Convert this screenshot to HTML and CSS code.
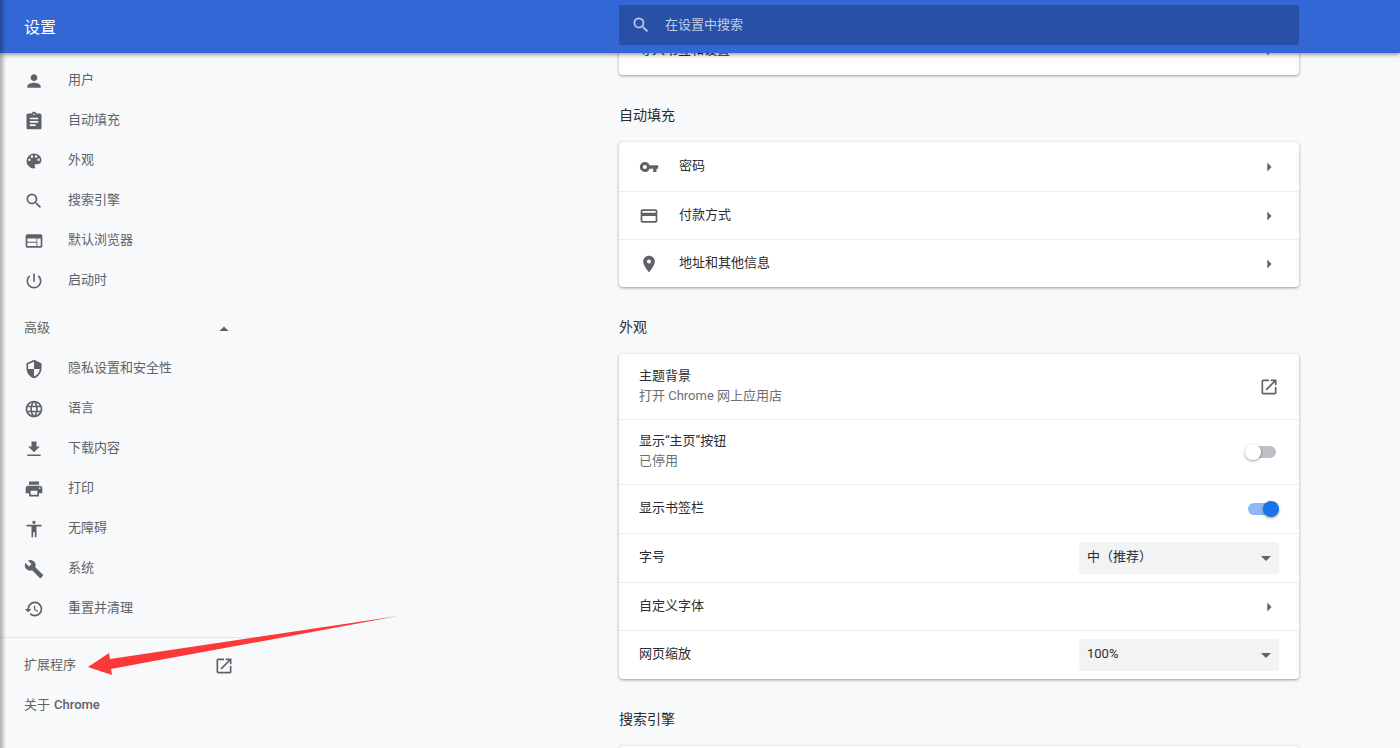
FILE: index.html
```
<!DOCTYPE html>
<html lang="zh-CN">
<head>
<meta charset="utf-8">
<title>设置</title>
<link rel="stylesheet" href="styles.css">
</head>
<body>
<svg class="defs" aria-hidden="true">
  <symbol id="search" viewBox="0 0 24 24"><path d="M15.5 14h-.79l-.28-.27A6.471 6.471 0 0 0 16 9.500 6.500 6.500 0 1 0 9.500 16c1.610 0 3.090-.59 4.230-1.570l.27.28v.79l5 4.990L20.490 19l-4.990-5zm-6 0C7.010 14 5 11.990 5 9.500S7.010 5 9.500 5 14 7.010 14 9.500 11.990 14 9.500 14z"/></symbol>
  <symbol id="right" viewBox="0 0 24 24"><path d="M10 17.500l5-5.500-5-5.500z"/></symbol>
  <symbol id="down" viewBox="0 0 24 24"><path d="M6 9.500l6 6 6-6z"/></symbol>
  <symbol id="open" viewBox="0 0 24 24"><path d="M19 19H5V5h7V3H5a2 2 0 0 0-2 2v14a2 2 0 0 0 2 2h14c1.100 0 2-.9 2-2v-7h-2v7zM14 3v2h3.590l-9.830 9.830 1.410 1.410L19 6.410V10h2V3h-7z"/></symbol>
</svg>

<header class="toolbar">
  <h1 class="toolbar-title">设置</h1>
  <label class="search">
    <svg class="icon"><use href="#search"/></svg>
    <input class="search-input" type="search" placeholder="在设置中搜索" aria-label="在设置中搜索">
  </label>
</header>

<div class="content">
  <nav class="sidebar">
    <a class="nav-item" href="#people"><svg class="icon" viewBox="0 0 24 24"><path d="M12 12c2.210 0 4-1.790 4-4s-1.790-4-4-4-4 1.790-4 4 1.790 4 4 4zm0 2c-2.670 0-8 1.340-8 4v2h16v-2c0-2.660-5.330-4-8-4z"/></svg>用户</a>
    <a class="nav-item" href="#autofill"><svg class="icon" viewBox="0 0 24 24"><path d="M19 3h-4.180C14.400 1.840 13.300 1 12 1s-2.400.84-2.820 2H5c-1.100 0-2 .9-2 2v15c0 1.100.9 2 2 2h14c1.100 0 2-.9 2-2V5c0-1.100-.9-2-2-2zm-7 0c.55 0 1 .45 1 1s-.45 1-1 1-1-.45-1-1 .45-1 1-1zm2 15H7v-2h7v2zm3-4H7v-2h10v2zm0-4H7V8h10v2z"/></svg>自动填充</a>
    <a class="nav-item" href="#appearance"><svg class="icon" viewBox="0 0 24 24"><path d="M12 3a9 9 0 0 0 0 18c.83 0 1.500-.67 1.500-1.500 0-.39-.15-.74-.39-1.010-.23-.26-.38-.61-.38-.99 0-.83.67-1.500 1.500-1.500H16c2.760 0 5-2.240 5-5 0-4.420-4.030-8-9-8zm-5.500 9a1.500 1.500 0 1 1 0-3 1.500 1.500 0 0 1 0 3zm3-4a1.500 1.500 0 1 1 0-3 1.500 1.500 0 0 1 0 3zm5 0a1.500 1.500 0 1 1 0-3 1.500 1.500 0 0 1 0 3zm3 4a1.500 1.500 0 1 1 0-3 1.500 1.500 0 0 1 0 3z"/></svg>外观</a>
    <a class="nav-item" href="#search-engine"><svg class="icon"><use href="#search"/></svg>搜索引擎</a>
    <a class="nav-item" href="#default-browser"><svg class="icon" viewBox="0 0 24 24"><path d="M20 4H4c-1.100 0-1.990.9-1.990 2L2 18c0 1.100.9 2 2 2h16c1.100 0 2-.9 2-2V6c0-1.100-.9-2-2-2zm-5 14H4v-4h11v4zm0-5H4V9h11v4zm5 5h-4V9h4v9z"/></svg>默认浏览器</a>
    <a class="nav-item" href="#startup"><svg class="icon" viewBox="0 0 24 24"><path d="M13 3h-2v10h2V3zm4.830 2.170l-1.420 1.420A6.920 6.920 0 0 1 19 12a7 7 0 1 1-11.420-5.420L6.170 5.170A8.932 8.932 0 0 0 3 12a9 9 0 0 0 18 0c0-2.740-1.230-5.180-3.170-6.830z"/></svg>启动时</a>
    <button class="nav-item nav-toggle" type="button" aria-expanded="true">高级<svg class="icon" viewBox="0 0 24 24"><path d="M6.500 14.500l5.500-5.500 5.500 5.500z"/></svg></button>
    <a class="nav-item" href="#privacy"><svg class="icon" viewBox="0 0 24 24"><path d="M12 1L3 5v6c0 5.550 3.840 10.740 9 12 5.160-1.260 9-6.450 9-12V5l-9-4zm0 10.990h7c-.53 4.120-3.280 7.790-7 8.940V12H5V6.300l7-3.110v8.800z"/></svg>隐私设置和安全性</a>
    <a class="nav-item" href="#languages"><svg class="icon" viewBox="0 0 24 24"><path d="M11.990 2C6.470 2 2 6.480 2 12s4.470 10 9.990 10C17.520 22 22 17.520 22 12S17.520 2 11.990 2zm6.930 6h-2.950a15.650 15.650 0 0 0-1.380-3.560A8.030 8.030 0 0 1 18.920 8zM12 4.040c.83 1.200 1.480 2.530 1.910 3.960h-3.820c.43-1.430 1.080-2.760 1.910-3.960zM4.260 14C4.100 13.360 4 12.690 4 12s.1-1.360.26-2h3.380c-.08.66-.14 1.320-.14 2s.06 1.340.14 2H4.260zm.82 2h2.950c.32 1.250.78 2.450 1.380 3.560A7.987 7.987 0 0 1 5.080 16zm2.950-8H5.080a7.987 7.987 0 0 1 4.330-3.560A15.650 15.650 0 0 0 8.030 8zM12 19.960c-.83-1.200-1.480-2.530-1.910-3.960h3.820c-.43 1.430-1.080 2.760-1.910 3.960zM14.340 14H9.660c-.09-.66-.16-1.320-.16-2s.07-1.350.16-2h4.680c.09.65.16 1.320.16 2s-.07 1.340-.16 2zm.25 5.560c.6-1.110 1.060-2.310 1.380-3.560h2.950a8.030 8.030 0 0 1-4.330 3.560zM16.360 14c.08-.66.14-1.320.14-2s-.06-1.340-.14-2h3.380c.16.64.26 1.310.26 2s-.1 1.360-.26 2h-3.380z"/></svg>语言</a>
    <a class="nav-item" href="#downloads"><svg class="icon" viewBox="0 0 24 24"><path d="M19 9h-4V3H9v6H5l7 7 7-7zM4 18.500v2h16v-2z"/></svg>下载内容</a>
    <a class="nav-item" href="#printing"><svg class="icon" viewBox="0 0 24 24"><path d="M19 8H5c-1.660 0-3 1.340-3 3v6h4v4h12v-4h4v-6c0-1.660-1.340-3-3-3zm-3 11H8v-5h8v5zm3-7c-.55 0-1-.45-1-1s.45-1 1-1 1 .45 1 1-.45 1-1 1zm-1-9H6v4h12V3z"/></svg>打印</a>
    <a class="nav-item" href="#accessibility"><svg class="icon" viewBox="0 0 24 24"><path d="M12 2c1.100 0 2 .9 2 2s-.9 2-2 2-2-.9-2-2 .9-2 2-2zm9 7h-6v13h-2v-6h-2v6H9V9H3V7h18v2z"/></svg>无障碍</a>
    <a class="nav-item" href="#system"><svg class="icon" viewBox="0 0 24 24"><path d="M22.700 19l-9.100-9.100c.9-2.300.4-5-1.500-6.900-2-2-5-2.400-7.400-1.300L9 6 6 9 1.600 4.700C.4 7.100.9 10.100 2.900 12.100c1.900 1.900 4.600 2.400 6.900 1.500l9.100 9.100c.4.4 1 .4 1.400 0l2.300-2.300c.5-.4.5-1.100.1-1.400z"/></svg>系统</a>
    <a class="nav-item" href="#reset"><svg class="icon" viewBox="0 0 24 24"><path d="M13 3a9 9 0 0 0-9 9H1l3.890 3.890.07.14L9 12H6a7 7 0 1 1 7 7c-1.930 0-3.680-.79-4.940-2.060l-1.420 1.420A8.954 8.954 0 0 0 13 21a9 9 0 0 0 0-18zm-1 5v5l4.280 2.540.72-1.210-3.500-2.080V8H12z"/></svg>重置并清理</a>
    <div class="nav-footer">
      <a class="nav-item nav-split" href="#extensions">扩展程序<svg class="icon"><use href="#open"/></svg></a>
      <a class="nav-item nav-about" href="#about">关于 <span class="medium">Chrome</span></a>
    </div>
  </nav>

  <main class="sections">
    <section class="card">
      <a class="row" href="#import"><span class="row-label">导入书签和设置</span><svg class="icon"><use href="#right"/></svg></a>
    </section>

    <h2 class="section-title">自动填充</h2>
    <section class="card" id="autofill">
      <a class="row row-tall" href="#passwords"><svg class="icon" viewBox="0 0 24 24"><path d="M12.650 10A5.990 5.990 0 0 0 7 6a6 6 0 0 0 0 12 5.990 5.990 0 0 0 5.650-4H17v4h4v-4h2v-4H12.650zM7 14.500a2.500 2.500 0 1 1 0-5 2.500 2.500 0 0 1 0 5z"/></svg><span class="row-label">密码</span><svg class="icon"><use href="#right"/></svg></a>
      <a class="row" href="#payments"><svg class="icon" viewBox="0 0 24 24"><path d="M20 4H4c-1.110 0-1.990.89-1.990 2L2 18c0 1.110.89 2 2 2h16c1.110 0 2-.89 2-2V6c0-1.110-.89-2-2-2zm0 14H4v-6h16v6zm0-10H4V6h16v2z"/></svg><span class="row-label">付款方式</span><svg class="icon"><use href="#right"/></svg></a>
      <a class="row" href="#addresses"><svg class="icon" viewBox="0 0 24 24"><path d="M12 2C8.130 2 5 5.130 5 9c0 5.250 7 13 7 13s7-7.750 7-13c0-3.870-3.130-7-7-7zm0 9.500a2.500 2.500 0 1 1 0-5 2.500 2.500 0 0 1 0 5z"/></svg><span class="row-label">地址和其他信息</span><svg class="icon"><use href="#right"/></svg></a>
    </section>

    <h2 class="section-title">外观</h2>
    <section class="card" id="appearance">
      <a class="row row-double" href="#themes"><span class="row-label">主题背景<span class="row-sub">打开 Chrome 网上应用店</span></span><svg class="icon"><use href="#open"/></svg></a>
      <label class="row row-double"><span class="row-label">显示“主页”按钮<span class="row-sub">已停用</span></span><input class="switch" type="checkbox" role="switch"></label>
      <label class="row row-tall"><span class="row-label">显示书签栏</span><input class="switch" type="checkbox" role="switch" checked></label>
      <div class="row row-tall">
        <label class="row-label" for="font-size">字号</label>
        <span class="select-box"><select class="select" id="font-size"><option>中（推荐）</option></select><svg class="icon select-arrow"><use href="#down"/></svg></span>
      </div>
      <a class="row" href="#fonts"><span class="row-label">自定义字体</span><svg class="icon"><use href="#right"/></svg></a>
      <div class="row row-tall">
        <label class="row-label" for="page-zoom">网页缩放</label>
        <span class="select-box"><select class="select" id="page-zoom"><option>100%</option></select><svg class="icon select-arrow"><use href="#down"/></svg></span>
      </div>
    </section>

    <h2 class="section-title">搜索引擎</h2>
    <section class="card" id="search-engine"><div class="row"></div></section>
  </main>
</div>

<svg class="pointer" viewBox="0 0 310 60" aria-hidden="true"><path d="M0 51L21 37l1 6L310 0Q160 28 23 53l1 6z"/></svg>
</body>
</html>
```
FILE: styles.css
```
* {
  box-sizing: border-box;
}

body {
  margin: 0;
  height: 100vh;
  display: flex;
  flex-direction: column;
  overflow: hidden;
  position: relative;
  background: #f8f9fa;
  color: #2b2c2f;
  font: 13px/20px Roboto, "Noto Sans CJK SC", sans-serif;
}

/* Soft shade along the window's left edge */
body::after {
  content: "";
  position: absolute;
  inset: 0 auto 0 0;
  width: 6px;
  z-index: 3;
  background: linear-gradient(to right, rgba(0, 0, 0, 0.3), rgba(0, 0, 0, 0));
  pointer-events: none;
}

a {
  color: inherit;
  text-decoration: none;
}

.defs {
  display: none;
}

.icon {
  width: 20px;
  height: 20px;
  flex: none;
  fill: #5f6368;
}

.toolbar,
.content {
  display: grid;
  grid-template-columns: 256px 1fr minmax(0, 680px) 101px;
}

.toolbar {
  position: relative;
  z-index: 2;
  flex: none;
  height: 53px;
  background: #3367d6;
  color: #fff;
  box-shadow: 0 1px 5px rgba(0, 0, 0, 0.5);
}

.toolbar-title {
  margin: 0;
  padding: 2px 0 0 24px;
  font-size: 16px;
  font-weight: 400;
  line-height: 51px;
}

.search {
  grid-column: 3;
  height: 40px;
  margin-top: 5px;
  padding: 0 12px;
  display: flex;
  align-items: center;
  gap: 14px;
  border-radius: 2px;
  background: #2850a7;
}

.search .icon {
  fill: #bfcbe5;
}

.search-input {
  flex: 1;
  min-width: 0;
  padding: 0;
  border: 0;
  outline: 0;
  background: none;
  color: #fff;
  font: inherit;
}

.search-input::placeholder {
  color: #bfcbe5;
}

.content {
  flex: 1;
  min-height: 0;
}

.sidebar {
  padding-top: 8px;
  color: #5f6368;
}

.nav-item {
  height: 40px;
  padding: 0 24px 2px;
  display: flex;
  align-items: center;
  gap: 24px;
}

.nav-item .icon {
  margin-top: 2px;
}

.nav-toggle {
  width: 100%;
  margin-top: 8px;
  border: 0;
  background: none;
  color: inherit;
  font: inherit;
}

.nav-toggle,
.nav-split {
  padding-right: 22px;
  justify-content: space-between;
}

.nav-about {
  gap: 4px;
}

.nav-footer {
  margin-top: 8px;
  padding-top: 8px;
  border-top: 1px solid #e3e5e7;
}

.medium {
  font-weight: 500;
}

/* The list is shown scrolled, its first row partly under the toolbar */
.sections {
  grid-column: 3;
  margin-top: -26px;
}

.card {
  border-radius: 4px;
  background: #fff;
  box-shadow: 0 1px 2px rgba(60, 64, 67, 0.3), 0 1px 3px 1px rgba(60, 64, 67, 0.15);
}

.section-title {
  margin: 0;
  padding: 30px 0 17px;
  font-size: 14px;
  font-weight: 400;
  line-height: 20px;
}

.row {
  min-height: 48px;
  padding: 0 20px;
  display: flex;
  align-items: center;
  gap: 20px;
}

.row + .row {
  border-top: 1px solid #ebedef;
}

.row-tall {
  min-height: 49px;
}

.row-double {
  min-height: 65px;
}

.row-label {
  flex: 1;
  padding-bottom: 2px;
}

.row-sub {
  display: block;
  color: #6b6f74;
}

.switch {
  appearance: none;
  position: relative;
  width: 34px;
  height: 16px;
  margin: 0;
}

.switch::before {
  content: "";
  position: absolute;
  inset: 2px 3px;
  border-radius: 6px;
  background: #bdc1c6;
}

.switch::after {
  content: "";
  position: absolute;
  top: 0;
  left: 0;
  width: 16px;
  height: 16px;
  border-radius: 50%;
  background: #fff;
  box-shadow: 0 1px 3px rgba(0, 0, 0, 0.4);
}

.switch:checked::before {
  background: #8cb8f8;
}

.switch:checked::after {
  left: auto;
  right: 0;
  background: #1a73e8;
}

.select-box {
  position: relative;
  width: 200px;
}

.select {
  display: block;
  appearance: none;
  width: 100%;
  height: 32px;
  padding: 0 24px 2px 8px;
  border: 0;
  border-radius: 4px;
  background: #f1f3f4;
  color: inherit;
  font: inherit;
}

.select-arrow {
  position: absolute;
  top: 6px;
  right: 3px;
  pointer-events: none;
}

/* Hand-drawn arrow lying over the page, aimed at the extensions link */
.pointer {
  position: absolute;
  left: 88px;
  top: 616px;
  z-index: 4;
  width: 310px;
  height: 60px;
  fill: #fd3838;
  pointer-events: none;
}
```
